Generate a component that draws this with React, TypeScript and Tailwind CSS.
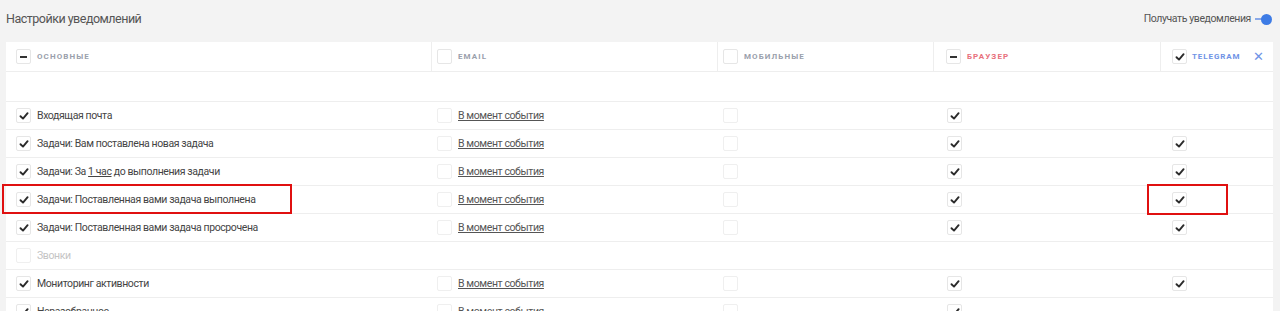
import React from "react";

const Check = () => (
  <svg width="10" height="10" viewBox="0 0 10 10">
    <path d="M1.5 5.2 L4 7.6 L8.6 2.2" fill="none" stroke="#2b2b2b" strokeWidth="1.9" strokeLinecap="round" strokeLinejoin="round" />
  </svg>
);

const Box = ({ state, faded }: { state?: "check" | "minus" | "none"; faded?: boolean }) => (
  <span
    className={`flex h-[15px] w-[15px] shrink-0 items-center justify-center rounded-[2px] border bg-white ${faded ? "border-[#efefef]" : "border-[#e6e6e6]"}`}
  >
    {state === "check" && <Check />}
    {state === "minus" && <span className="h-[2px] w-[7px] bg-[#333]" />}
  </span>
);

const cols = "grid grid-cols-[425px_286px_216px_227px_113px]";

type Row = { label: React.ReactNode; on: boolean; email: boolean; mob: boolean; br: boolean; tg: boolean; faded?: boolean };

const rows: Row[] = [
  { label: "Входящая почта", on: true, email: true, mob: true, br: true, tg: false },
  { label: "Задачи: Вам поставлена новая задача", on: true, email: true, mob: true, br: true, tg: true },
  {
    label: (
      <>
        Задачи: За <span className="underline">1 час</span> до выполнения задачи
      </>
    ),
    on: true, email: true, mob: true, br: true, tg: true,
  },
  { label: "Задачи: Поставленная вами задача выполнена", on: true, email: true, mob: true, br: true, tg: true },
  { label: "Задачи: Поставленная вами задача просрочена", on: true, email: true, mob: true, br: true, tg: true },
  { label: "Звонки", on: false, email: false, mob: false, br: false, tg: false, faded: true },
  { label: "Мониторинг активности", on: true, email: true, mob: true, br: true, tg: true },
  { label: "Неразобранное", on: true, email: true, mob: true, br: true, tg: false },
];

export default function App() {
  return (
    <div className="relative h-[311px] w-[1280px] overflow-hidden bg-[#f3f3f3] font-['Roboto',sans-serif] text-[10.5px] tracking-[-0.4px] text-[#444]">
      <div className="flex h-[42px] items-center justify-between pl-[6px] pr-[8px] pb-[4px]">
        <span className="text-[12.5px] tracking-[-0.5px] text-[#555]">Настройки уведомлений</span>
        <div className="flex items-center gap-[4px] text-[10.5px] text-[#555]">
          <span>Получать уведомления</span>
          <span className="relative flex h-[12px] w-[17px] items-center">
            <span className="h-[2px] w-[10px] bg-[#8aa9e8]" />
            <span className="absolute right-0 h-[11px] w-[11px] rounded-full bg-[#3d7be5]" />
          </span>
        </div>
      </div>
      <div className="ml-[6px] w-[1267px] bg-white">
        <div className={`${cols} h-[30px] border-b border-[#eeeeee] text-[8px] font-bold tracking-[1.1px]`}>
          <div className="flex items-center gap-[6px] pl-[10px]">
            <Box state="minus" />
            <span className="text-[#9aa0ac]">ОСНОВНЫЕ</span>
          </div>
          <div className="flex items-center gap-[6px] border-l border-[#eeeeee] pl-[5px]">
            <Box />
            <span className="text-[#9aa0ac]">EMAIL</span>
          </div>
          <div className="flex items-center gap-[6px] border-l border-[#eeeeee] pl-[5px]">
            <Box />
            <span className="text-[#9aa0ac]">МОБИЛЬНЫЕ</span>
          </div>
          <div className="flex items-center gap-[6px] border-l border-[#eeeeee] pl-[12px]">
            <Box state="minus" />
            <span className="text-[#e8707c]">БРАУЗЕР</span>
          </div>
          <div className="flex items-center gap-[5px] border-l border-[#eeeeee] pl-[11px] pr-[8px]">
            <Box state="check" />
            <span className="tracking-[0.9px] text-[#6f93e6]">TELEGRAM</span>
            <span className="ml-auto text-[13px] font-normal text-[#6f93e6]">✕</span>
          </div>
        </div>
        <div className="h-[30px] border-b border-[#eeeeee]" />
        {rows.map((r, i) => (
          <div key={i} className={`${cols} h-[28px] border-b border-[#eeeeee]`}>
            <div className="flex items-center gap-[6px] pl-[10px]">
              <Box state={r.on ? "check" : "none"} faded={r.faded} />
              <span className={`pt-[1px] ${r.faded ? "text-[#c4c4c4]" : "text-[#444]"}`}>{r.label}</span>
            </div>
            <div className="flex items-center gap-[6px] pl-[6px]">
              {r.email && (
                <>
                  <Box faded />
                  <span className="pt-[1px] text-[#555] underline">В момент события</span>
                </>
              )}
            </div>
            <div className="flex items-center pl-[6px]">{r.mob && <Box faded />}</div>
            <div className="flex items-center pl-[14px]">{r.br && <Box state="check" />}</div>
            <div className="flex items-center pl-[12px]">{r.tg && <Box state="check" />}</div>
          </div>
        ))}
      </div>
      <div className="pointer-events-none absolute left-[2px] top-[184px] h-[30px] w-[290px] border-2 border-[#e01010]" />
      <div className="pointer-events-none absolute left-[1147px] top-[184px] h-[31px] w-[81px] border-2 border-[#e01010]" />
    </div>
  );
}
